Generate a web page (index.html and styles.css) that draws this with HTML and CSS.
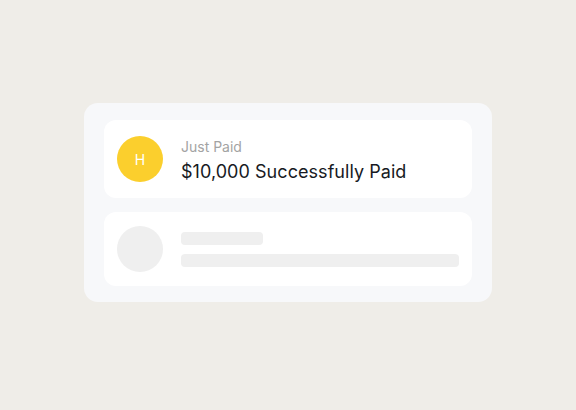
FILE: index.html
```html
<!DOCTYPE html>
<html>
<head>
<meta charset="utf-8">
<link rel="stylesheet" href="styles.css">
</head>
<body>
<main class="stage">
  <section class="panel">
    <div class="item">
      <div class="avatar avatar-yellow">H</div>
      <div class="info">
        <div class="label">Just Paid</div>
        <div class="title">$10,000 Successfully Paid</div>
      </div>
    </div>
    <div class="item item-skeleton">
      <div class="avatar avatar-skeleton"></div>
      <div class="bars">
        <div class="bar bar-short"></div>
        <div class="bar bar-long"></div>
      </div>
    </div>
  </section>
</main>
</body>
</html>
```

FILE: styles.css
```css
* { box-sizing: border-box; }
html, body { margin: 0; padding: 0; }
body {
  font-family: Inter, "Noto Sans", "Liberation Sans", sans-serif;
  background: #efede8;
}
.stage {
  width: 576px;
  height: 410px;
  padding-top: 103px;
  display: flex;
  justify-content: center;
  align-items: flex-start;
}
.panel {
  width: 408px;
  height: 199px;
  background: #f7f8fa;
  border-radius: 14px;
  padding: 17px 20px 16px;
  display: flex;
  flex-direction: column;
  gap: 14px;
}
.item {
  background: #ffffff;
  border-radius: 12px;
  height: 78px;
  padding: 0 13px;
  display: flex;
  align-items: center;
  gap: 18px;
}
.item-skeleton { height: 74px; }
.avatar {
  width: 46px;
  height: 46px;
  border-radius: 50%;
  flex: none;
  display: flex;
  align-items: center;
  justify-content: center;
  color: #ffffff;
  font-size: 14px;
}
.avatar-yellow { background: #fbcf2d; }
.avatar-skeleton { background: #efefef; }
.info {
  display: flex;
  flex-direction: column;
  gap: 6px;
  padding-top: 2px;
}
.label {
  font-size: 14px;
  line-height: 17px;
  color: #a3a3a3;
}
.title {
  font-size: 18px;
  line-height: 22px;
  color: #171a23;
  letter-spacing: 0.05px;
}
.bars {
  flex: 1;
  display: flex;
  flex-direction: column;
  gap: 9px;
}
.bar {
  height: 13px;
  background: #efefef;
  border-radius: 4px;
}
.bar-short { width: 82px; }
.bar-long { width: 278px; }
```
